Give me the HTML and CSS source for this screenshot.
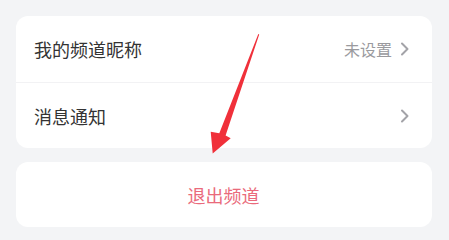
FILE: index.html
```html
<!DOCTYPE html>
<html lang="zh">
<head>
<meta charset="utf-8">
<link rel="stylesheet" href="styles.css">
</head>
<body>
<div class="page">
  <div class="card">
    <div class="row">
      <span class="label">我的频道昵称</span>
      <span class="right">
        <span class="value">未设置</span>
        <svg class="chev" width="10" height="14" viewBox="0 0 10 14"><path d="M2 1.5 L7.5 7 L2 12.5" fill="none" stroke="#a3a3a8" stroke-width="2" stroke-linecap="round" stroke-linejoin="round"/></svg>
      </span>
    </div>
    <div class="row">
      <span class="label">消息通知</span>
      <span class="right">
        <svg class="chev" width="10" height="14" viewBox="0 0 10 14"><path d="M2 1.5 L7.5 7 L2 12.5" fill="none" stroke="#a3a3a8" stroke-width="2" stroke-linecap="round" stroke-linejoin="round"/></svg>
      </span>
    </div>
  </div>
  <div class="card exit">
    <span class="exit-text">退出频道</span>
  </div>
</div>
<svg class="arrow" width="449" height="239" viewBox="0 0 449 239">
  <polygon points="258.3,34 219.3,133.3 210.7,131.7 212.7,153.5 230.7,138.3 225.6,135.6 259.2,34.5" fill="#f0303a"/>
</svg>
</body>
</html>
```
FILE: styles.css
```css
html, body {
  margin: 0;
  padding: 0;
}
body {
  background: #f3f4f6;
  font-family: "Noto Sans CJK SC", "Noto Sans", sans-serif;
  width: 449px;
  height: 239px;
  overflow: hidden;
  position: relative;
}
.page {
  padding: 16px 17px 0 16px;
  display: flex;
  flex-direction: column;
  gap: 14px;
}
.card {
  background: #ffffff;
  border-radius: 12px;
}
.row {
  height: 66px;
  display: flex;
  align-items: center;
  justify-content: space-between;
  padding: 0 22px 0 18px;
  box-sizing: border-box;
}
.row + .row {
  border-top: 1px solid #f2f2f4;
  height: 66px;
}
.label {
  font-size: 18px;
  color: #333333;
  line-height: 1;
}
.right {
  display: flex;
  align-items: center;
  gap: 8px;
}
.value {
  font-size: 16px;
  color: #9a9a9e;
  line-height: 1;
}
.chev {
  display: block;
}
.exit {
  height: 65px;
  display: flex;
  align-items: center;
  justify-content: center;
}
.exit-text {
  font-size: 18px;
  color: #ea6a7b;
  line-height: 1;
  margin-right: 1px;
}
.arrow {
  position: absolute;
  left: 0;
  top: 0;
  pointer-events: none;
}
```
